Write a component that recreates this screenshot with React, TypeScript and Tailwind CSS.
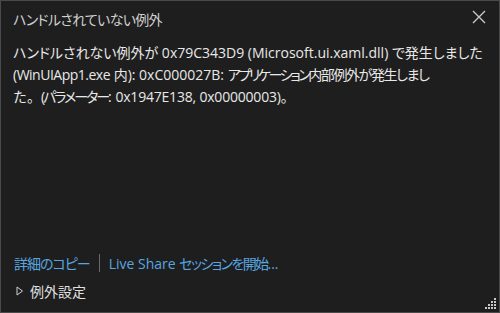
import React from "react";

const font = { fontFamily: '"Open Sans", "Noto Sans CJK JP", sans-serif' };

// Japanese run with proportional kana (close to Yu Gothic UI widths)
function J({ children, className = "" }: { children: React.ReactNode; className?: string }) {
  return <span className={`[font-feature-settings:'palt'] ${className}`}>{children}</span>;
}

function Grip() {
  // resize grip dots, bottom-right
  const dots = [
    [9, 0],
    [9, 3], [6, 3],
    [9, 6], [6, 6], [3, 6],
    [9, 9], [6, 9], [3, 9], [0, 9],
  ];
  return (
    <svg width="12" height="12" viewBox="0 0 12 12" className="absolute bottom-[2px] right-[2px]">
      {dots.map(([x, y], i) => (
        <rect key={i} x={x} y={y} width="2" height="2" fill="#c8c8c8" />
      ))}
    </svg>
  );
}

export default function App() {
  return (
    <div
      className="relative w-[500px] h-[313px] bg-[#1e1e1e] border border-[#4a4a4a] flex flex-col text-[#dcdcdc] overflow-hidden whitespace-nowrap"
      style={font}
    >
      {/* Header */}
      <div className="flex items-center justify-between pl-[12px] pr-[13px] h-[35px] pt-[1px]">
        <span className="text-[14px] text-[#d0d0d0]">
          <J className="tracking-[-0.7px]">ハンドルされていない例外</J>
        </span>
        <svg width="14" height="14" viewBox="0 0 14 14" className="mb-[4px]">
          <path d="M1 1 L13 13 M13 1 L1 13" stroke="#c8c8c8" strokeWidth="1.4" />
        </svg>
      </div>

      {/* Message */}
      <div className="px-[12px] pt-[6px] text-[14px] leading-[22px] text-[#e8e8e8]">
        <div>
          <J>ハンドルされない例外が</J> 0x79C343D9 (Microsoft.ui.xaml.dll) <J>で発生しました</J>
        </div>
        <div>
          <span className="tracking-[-0.5px]">(WinUIApp1.exe</span> <J>内</J>): 0xC000027B:{" "}
          <J className="tracking-[-2.4px]">アプリケーション</J>
          <J className="tracking-[-1.4px]">内部例外が発生しまし</J>
        </div>
        <div>
          た。<J className="tracking-[-2px]">(パラメーター</J>:{" "}
          <span className="tracking-[-0.2px]">0x1947E138, 0x00000003)</span>。
        </div>
      </div>

      <div className="flex-1" />

      {/* Actions */}
      <div className="flex items-center pl-[13px] h-[22px] mb-[3px] text-[14px] text-[#58a6e0]">
        <J className="tracking-[-1px]">詳細のコピー</J>
        <span className="mx-[9px] w-px h-[18px] bg-[#6a6a6a]" />
        <span>
          Live Share <J className="tracking-[-1.6px]">セッションを開始</J>...
        </span>
      </div>
      <div className="flex items-center pl-[15px] h-[28px] mb-[7px] text-[14px] text-[#e0e0e0]">
        <svg width="8" height="10" viewBox="0 0 8 10" className="mr-[6px]">
          <path d="M1 1 L6.5 5 L1 9 Z" fill="none" stroke="#d0d0d0" strokeWidth="1" />
        </svg>
        <span>例外設定</span>
      </div>

      <Grip />
    </div>
  );
}
